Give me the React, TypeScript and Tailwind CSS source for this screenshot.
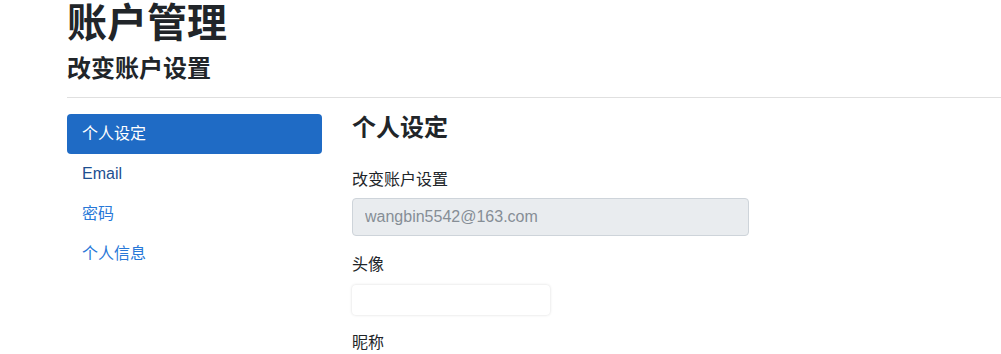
import React from "react";

const font = "font-['Liberation_Sans','Noto_Sans_CJK_SC',sans-serif]";

export default function App() {
  const links = ["Email", "密码", "个人信息"];

  return (
    <div className={`${font} bg-white text-[#212529] pl-[67px] h-[354px] overflow-hidden`}>
      {/* Page header */}
      <h1 className="text-[40px] font-bold leading-[44px] mt-[1px]">账户管理</h1>
      <h2 className="text-[24px] font-semibold leading-[30px] mt-[9px]">改变账户设置</h2>
      <hr className="mt-[13px] border-t border-[#e0e0e0]" />

      <div className="flex gap-[30px] mt-[16px]">
        {/* Sidebar */}
        <nav className="w-[255px] shrink-0 flex flex-col">
          <a className="h-[40px] flex items-center px-[15px] rounded bg-[#1f6bc5] text-white text-[16px]">
            个人设定
          </a>
          {links.map((label, i) => (
            <a
              key={label}
              className={`h-[40px] flex items-center px-[15px] text-[16px] ${
                i === 0 ? "text-[#1d4f91]" : "text-[#2878d8]"
              }`}
            >
              {label}
            </a>
          ))}
        </nav>

        {/* Content */}
        <div className="flex-1">
          <h3 className="text-[24px] font-semibold leading-[30px] mt-[-1px]">个人设定</h3>
          <label className="block text-[16px] leading-[24px] mt-[25px]">改变账户设置</label>
          <input
            disabled
            value="wangbin5542@163.com"
            className="block mt-[6px] w-[397px] h-[38px] px-[12px] bg-[#e9ecef] border border-[#ced4da] rounded text-[16px] text-[#868e96]"
          />
          <label className="block text-[16px] leading-[24px] mt-[17px]">头像</label>
          <div className="mt-[8px] w-[198px] h-[30px] bg-white rounded shadow-[0_0_3px_rgba(0,0,0,0.15)]" />
          <label className="block text-[16px] leading-[24px] mt-[16px]">昵称</label>
        </div>
      </div>
    </div>
  );
}
